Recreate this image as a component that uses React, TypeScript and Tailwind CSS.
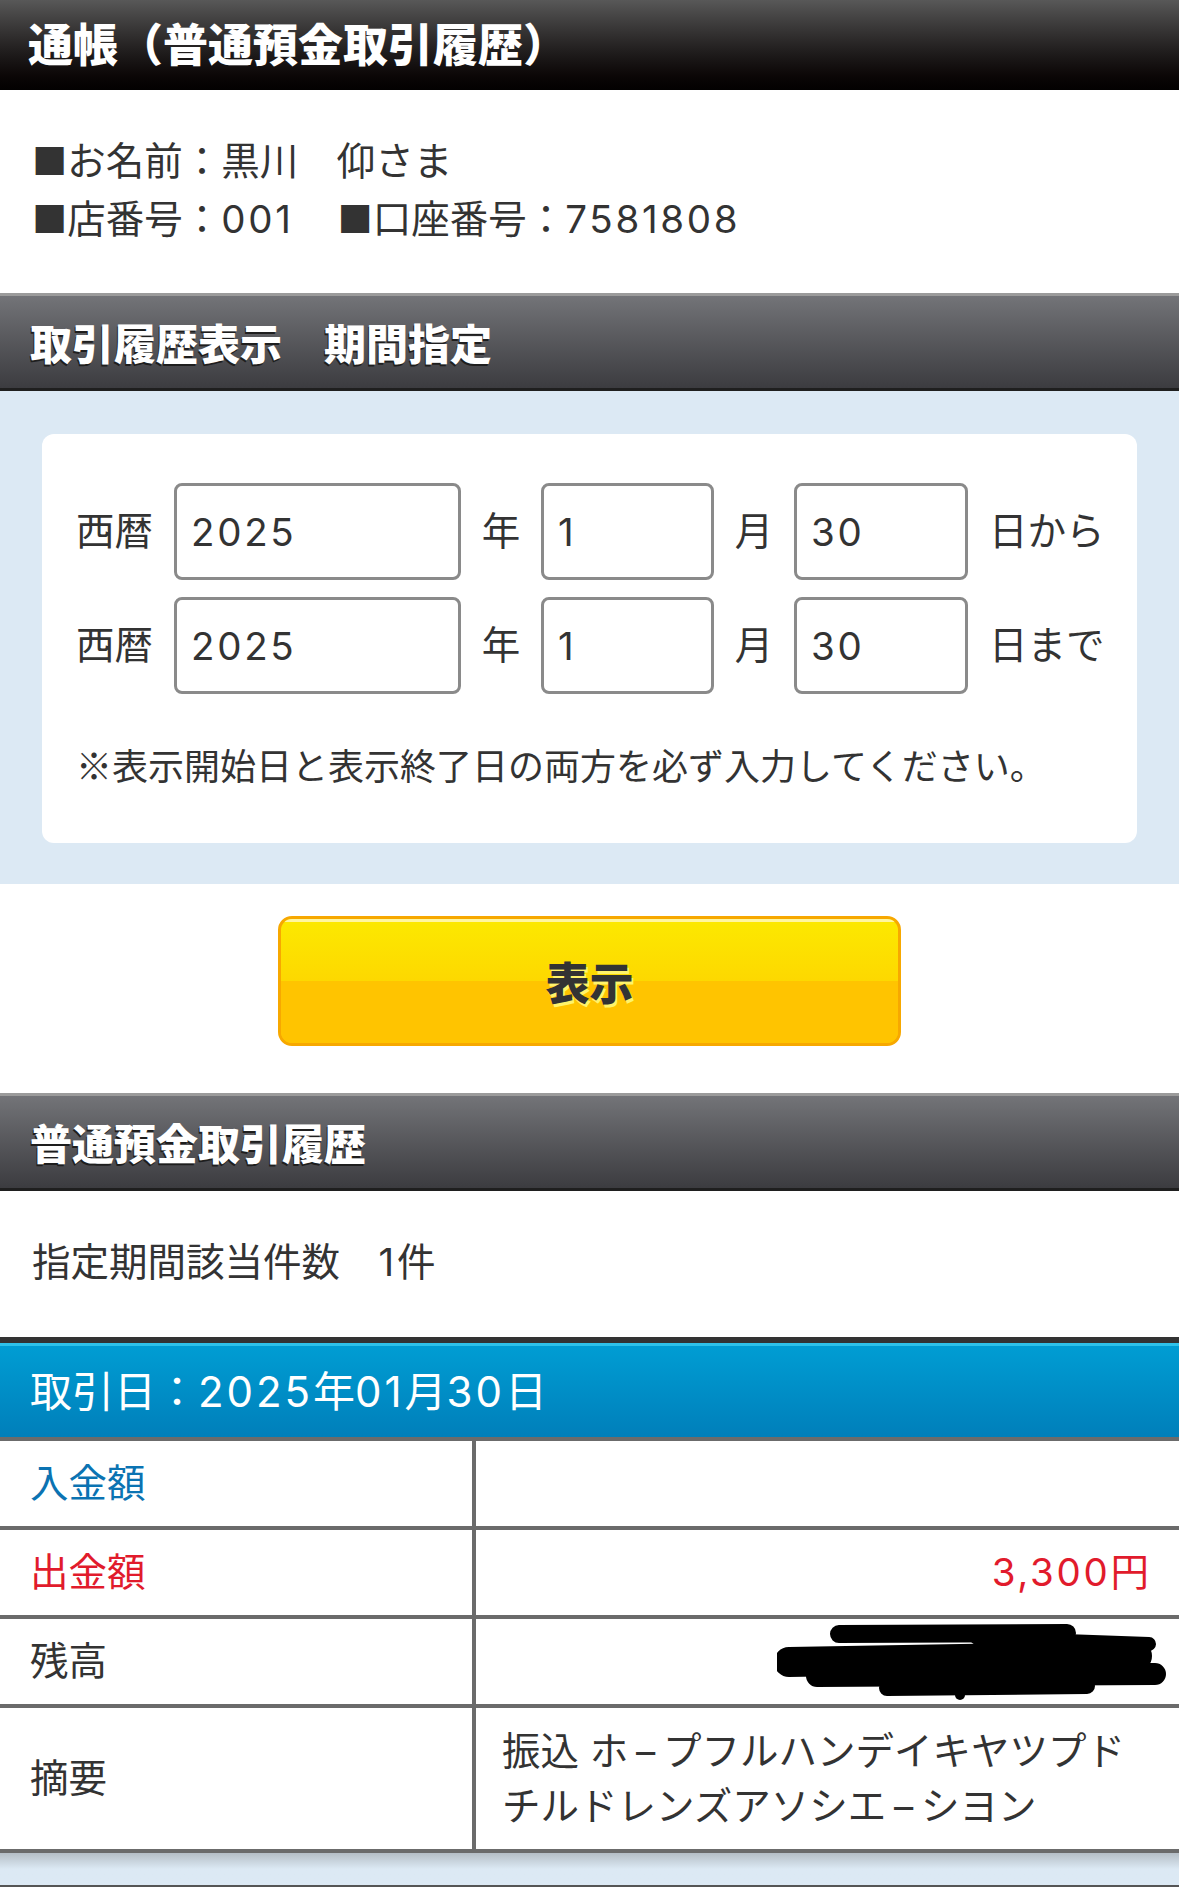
const jp = "font-['Inter','Noto_Sans_CJK_JP','Noto_Sans',sans-serif]"

function N({ children }: { children: React.ReactNode }) {
  return <span className="tracking-[0.07em]">{children}</span>
}

function SectionHeader({ title }: { title: string }) {
  return (
    <div className="h-[98px] border-t-[3px] border-t-[#9b9b9b] border-b-[3px] border-b-[#1f1f1f] bg-gradient-to-b from-[#737478] to-[#3c3c40] flex items-center px-[30px]">
      <h2 className="font-['Noto_Sans_CJK_JP',sans-serif] text-[42px] font-black text-white leading-none [text-shadow:-1px_2px_0_#1e1e1e]">{title}</h2>
    </div>
  )
}

function DateInput({ value, width }: { value: string; width: string }) {
  return (
    <input
      readOnly
      value={value}
      className={`${width} shrink-0 h-[97px] border-[3px] border-[#8a8a8a] rounded-[8px] bg-white px-[14px] text-[38.5px] tracking-[0.07em] text-[#333] outline-none`}
    />
  )
}

function DateRow({ y, m, d, suffix }: { y: string; m: string; d: string; suffix: string }) {
  return (
    <div className="flex items-center whitespace-nowrap text-[38.5px] text-[#333]">
      <span className="w-[98px] shrink-0">西暦</span>
      <DateInput value={y} width="w-[287px]" />
      <span className="w-[80px] shrink-0 text-center">年</span>
      <DateInput value={m} width="w-[173px]" />
      <span className="w-[80px] shrink-0 text-center">月</span>
      <DateInput value={d} width="w-[174px]" />
      <span className="ml-[21px] shrink-0">{suffix}</span>
    </div>
  )
}

function Redacted() {
  return (
    <svg width="390" height="80" viewBox="0 0 390 80">
      <g stroke="#000" strokeLinecap="round" fill="none">
        <line x1="62" y1="12" x2="290" y2="11" strokeWidth="18" />
        <line x1="200" y1="16" x2="372" y2="22" strokeWidth="14" />
        <line x1="12" y1="40" x2="360" y2="34" strokeWidth="30" />
        <line x1="40" y1="54" x2="378" y2="52" strokeWidth="22" />
        <line x1="110" y1="66" x2="310" y2="64" strokeWidth="16" />
      </g>
      <circle cx="183" cy="73" r="5" fill="#000" />
    </svg>
  )
}

function Dash() {
  return <span className="inline-block w-[0.9em] text-center">–</span>
}

function TableRow({ label, labelClass, height, children }: { label: string; labelClass: string; height: string; children?: React.ReactNode }) {
  return (
    <div className={`flex ${height} border-b-[4px] border-[#6b6b6b]`}>
      <div className={`w-[472px] flex items-center px-[30px] text-[38.5px] ${labelClass}`}>{label}</div>
      <div className="flex-1 border-l-[4px] border-[#6b6b6b] flex items-center">{children}</div>
    </div>
  )
}

export default function App() {
  return (
    <div className={`${jp} w-full min-h-screen bg-white text-[#333]`}>
      {/* page title */}
      <div className="h-[90px] bg-gradient-to-b from-[#585858] via-[#1e1b1b] via-60% to-[#030101] flex items-center px-[28px] pb-[6px]">
        <h1 className="font-['Noto_Sans_CJK_JP',sans-serif] text-[45px] font-black text-white leading-none">通帳（普通預金取引履歴）</h1>
      </div>

      {/* account info */}
      <div className="pt-[42px] pb-[45px] px-[32px] text-[38.5px] leading-[58px]">
        <p>■お名前：黒川　仰さま</p>
        <p>
          ■店番号：<N>001</N>
          <span className="ml-[44px]">■口座番号：<N>7581808</N></span>
        </p>
      </div>

      <SectionHeader title="取引履歴表示　期間指定" />

      <div className="bg-[#dce9f4] px-[42px] pt-[43px] pb-[41px]">
        <div className="bg-white rounded-[12px] pt-[49px] pb-[51px] px-[34px]">
          <div className="flex flex-col gap-[17px]">
            <DateRow y="2025" m="1" d="30" suffix="日から" />
            <DateRow y="2025" m="1" d="30" suffix="日まで" />
          </div>
          <p className="mt-[45px] text-[36px] leading-[50px]">
            <span className="font-['Noto_Sans_CJK_JP',sans-serif]">※</span>表示開始日と表示終了日の両方を必ず入力してください。
          </p>
        </div>
      </div>

      <div className="pt-[32px] pb-[47px] flex justify-center">
        <button className="relative w-[623px] h-[130px] rounded-[14px] border-[3px] border-[#f7a800] bg-gradient-to-b from-[#fce900] via-[#fdd800] to-[#ffc300] overflow-hidden">
          <span className="absolute inset-x-0 top-0 h-[3px] bg-[#fff6a0]" />
          <span className="absolute inset-x-0 bottom-0 h-1/2 bg-[#ffc400]" />
          <span className="relative font-['Noto_Sans_CJK_JP',sans-serif] text-[44px] font-black text-[#333] [text-shadow:2px_3px_0_#fff36b]">表示</span>
        </button>
      </div>

      <SectionHeader title="普通預金取引履歴" />

      <div className="pt-[42px] pb-[46px] px-[32px] text-[38.5px] leading-[58px]">
        指定期間該当件数　<N>1</N>件
      </div>

      {/* transaction */}
      <div className="border-t-[6px] border-[#333]">
        <div className="h-[94px] border-t-[3px] border-[#2ec2ea] bg-gradient-to-b from-[#009dd3] to-[#007fba] flex items-center px-[30px]">
          <span className="text-[42px] text-white">
            取引日：<N>2025</N>年<N>01</N>月<N>30</N>日
          </span>
        </div>
        <div className="border-t-[4px] border-[#6b6b6b]">
          <TableRow label="入金額" labelClass="text-[#0b73b2]" height="h-[89px]" />
          <TableRow label="出金額" labelClass="text-[#e11b2c]" height="h-[89px]">
            <span className="ml-auto pr-[30px] text-[38.5px] text-[#e11b2c]">
              <N>3,300</N>円
            </span>
          </TableRow>
          <TableRow label="残高" labelClass="text-[#333]" height="h-[89px]">
            <div className="ml-auto pr-[12px] flex items-center">
              <Redacted />
            </div>
          </TableRow>
          <TableRow label="摘要" labelClass="text-[#333]" height="h-[145px]">
            <p className="pl-[26px] text-[38.5px] leading-[55px]">
              振込 ホ<Dash />プフルハンデイキヤツプド
              <br />
              チルドレンズアソシエ<Dash />シヨン
            </p>
          </TableRow>
        </div>
      </div>

      <div className="h-[34px] bg-gradient-to-b from-[#b5bec6] via-[#dce9f4] to-[#dce9f4] border-b-[2px] border-[#555]" />
    </div>
  )
}
